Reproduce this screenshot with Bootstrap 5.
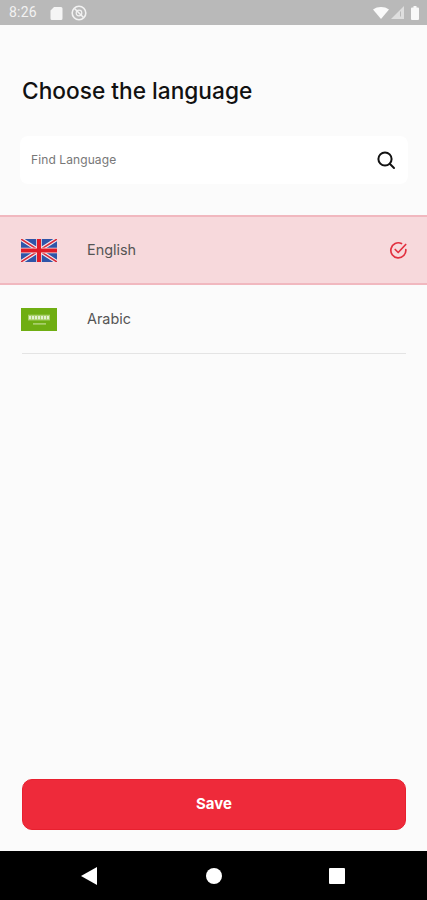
<!DOCTYPE html>
<html lang="en">
<head>
  <meta charset="UTF-8" />
  <meta name="viewport" content="width=device-width, initial-scale=1" />
  <title>Choose the language</title>
  <link rel="stylesheet" href="https://cdn.jsdelivr.net/npm/bootstrap@5.3.0/dist/css/bootstrap.min.css" />
  <style>
    body {
      background-color: #fbfbfb;
      font-family: Inter, "Liberation Sans", sans-serif;
    }
    .phone-screen {
      width: 427px;
      height: 900px;
      overflow: hidden;
    }
    /* status bar */
    .status-strip {
      height: 25px;
      background-color: #b9b9b9;
      color: #f2f2f2;
      padding: 0 8px 0 9px;
      font-family: Roboto, sans-serif;
      font-size: 14px;
    }
    .status-clock { width: 28px; margin-right: 13px; letter-spacing: .2px; }
    .screen-title {
      margin: 52px 0 0 22px;
      height: 28px;
      font-size: 22.7px;
      line-height: 28px;
      font-weight: 500;
      color: #111;
    }
    /* search box */
    .find-box {
      height: 48px;
      margin: 31px 19px 0 20px;
      padding: 0 12px 0 11px;
      background-color: #fff;
      border-radius: 8px;
    }
    .find-input {
      border: 0;
      outline: 0;
      padding: 0;
      background: transparent;
      font-size: 12px;
      letter-spacing: .1px;
      color: #777;
    }
    .find-input::placeholder { color: #777; opacity: 1; }
    /* language rows */
    .lang-list { margin-top: 31px; }
    .lang-row {
      padding: 0 20px 0 21px;
      font-size: 14.4px;
      color: #555;
    }
    .lang-selected {
      height: 70px;
      background-color: #f7d9dc;
      border-top: 2px solid #f1b8bf;
      border-bottom: 2px solid #f1b8bf;
    }
    .lang-plain { height: 68px; }
    .lang-rule {
      height: 1px;
      margin: 0 21px 0 22px;
      background-color: #e4e4e4;
    }
    .lang-flag { width: 36px; height: 23px; margin-right: 30px; }
    /* save button */
    .save-btn {
      width: 384px;
      height: 51px;
      margin: 0 0 21px 22px;
      background-color: #ee2a3a;
      border: 1px solid #e8202f;
      border-radius: 10px;
      color: #fff;
      font-size: 15px;
      font-weight: 700;
    }
    .save-btn:hover { background-color: #ee2a3a; color: #fff; border-color: #e8202f; }
    .nav-strip {
      height: 49px;
      background-color: #000;
      padding: 0 82px 0 81px;
    }
    .nav-home { margin-left: 2px; }
  </style>
</head>
<body>
  <div class="phone-screen d-flex flex-column">

    <!-- status bar -->
    <div class="status-strip d-flex align-items-center flex-shrink-0">
      <span class="status-clock">8:26</span>
      <svg width="13" height="14" viewBox="0 0 13 14" class="me-2"><path d="M4 1h7a1.500 1.500 0 0 1 1.500 1.500v10A1.500 1.500 0 0 1 11 14H2a1.500 1.500 0 0 1-1.500-1.500V4.500z" fill="#f5f5f5"/></svg>
      <svg width="16" height="16" viewBox="0 0 16 16" fill="none" stroke="#f2f2f2" stroke-width="1.600"><circle cx="8" cy="8" r="6.800"/><path d="M3.500 3.500l9 9"/><circle cx="8" cy="8" r="2.800" stroke-width="1.200"/></svg>
      <div class="ms-auto d-flex align-items-center gap-1">
        <svg width="16" height="12" viewBox="0 0 16 12"><path d="M0 2.500C4.500-.8 11.500-.8 16 2.500L8 12z" fill="#fafafa"/></svg>
        <svg width="13" height="13" viewBox="0 0 13 13" style="margin-left:-2px"><path d="M13 0v13H0z" fill="#dedede"/><path d="M9.500 5.500v5" stroke="#b9b9b9" stroke-width="1"/></svg>
        <svg width="8" height="14" viewBox="0 0 8 14" style="margin-left:3px"><path d="M2.500 0h3v1.500H7a1 1 0 0 1 1 1V13a1 1 0 0 1-1 1H1a1 1 0 0 1-1-1V2.500a1 1 0 0 1 1-1h1.500z" fill="#f8f8f8"/></svg>
      </div>
    </div>

    <h1 class="screen-title">Choose the language</h1>

    <!-- search -->
    <div class="find-box d-flex align-items-center">
      <input class="find-input flex-grow-1" type="text" placeholder="Find Language" />
      <svg width="20" height="20" viewBox="0 0 20 20" fill="none" stroke="#111" stroke-width="2" stroke-linecap="round"><circle cx="9" cy="9" r="6.600"/><path d="M14 14l4 4"/></svg>
    </div>

    <!-- languages -->
    <div class="lang-list">
      <div class="lang-row lang-selected d-flex align-items-center">
        <svg class="lang-flag" viewBox="0 0 36 24" preserveAspectRatio="none">
          <rect width="36" height="24" fill="#2f55a8"/>
          <path d="M0 0l36 24M36 0L0 24" stroke="#f3e9ee" stroke-width="4"/>
          <path d="M0 0l36 24M36 0L0 24" stroke="#d92b3a" stroke-width="1.600"/>
          <path d="M18 0v24M0 12h36" stroke="#f8e6e8" stroke-width="5.500"/>
          <path d="M18 0v24M0 12h36" stroke="#e01c28" stroke-width="4"/>
        </svg>
        <span>English</span>
        <svg class="ms-auto" style="margin-right:-1px" width="19" height="19" viewBox="0 0 19 19" fill="none" stroke="#e2303f" stroke-width="1.700" stroke-linecap="round" stroke-linejoin="round">
          <path d="M16.800 8.500a7.500 7.500 0 1 1-4.300-6"/>
          <path d="M6.200 8.500l3 3 7.500-8"/>
        </svg>
      </div>
      <div class="lang-row lang-plain d-flex align-items-center">
        <svg class="lang-flag" viewBox="0 0 36 24" preserveAspectRatio="none">
          <rect width="36" height="24" fill="#6fae12"/>
          <rect x="7" y="7" width="22" height="6" fill="#a9d06c"/>
          <path d="M8 10h20" stroke="#e4f1cf" stroke-width="3.500" stroke-dasharray="2 1"/>
          <rect x="12" y="16" width="13" height="1.200" fill="#c4de96"/>
        </svg>
        <span>Arabic</span>
      </div>
      <div class="lang-rule"></div>
    </div>

    <!-- save -->
    <button class="btn save-btn mt-auto flex-shrink-0" type="button">Save</button>

    <!-- android nav -->
    <div class="nav-strip d-flex align-items-center justify-content-between flex-shrink-0">
      <svg width="16" height="18" viewBox="0 0 16 18"><path d="M16 0v18L0 9z" fill="#fff"/></svg>
      <svg class="nav-home" width="16" height="16" viewBox="0 0 16 16"><circle cx="8" cy="8" r="8" fill="#fff"/></svg>
      <svg width="16" height="16" viewBox="0 0 16 16"><rect width="16" height="16" rx="1" fill="#fff"/></svg>
    </div>
  </div>
  <script src="https://cdn.jsdelivr.net/npm/bootstrap@5.3.0/dist/js/bootstrap.bundle.min.js"></script>
</body>
</html>
